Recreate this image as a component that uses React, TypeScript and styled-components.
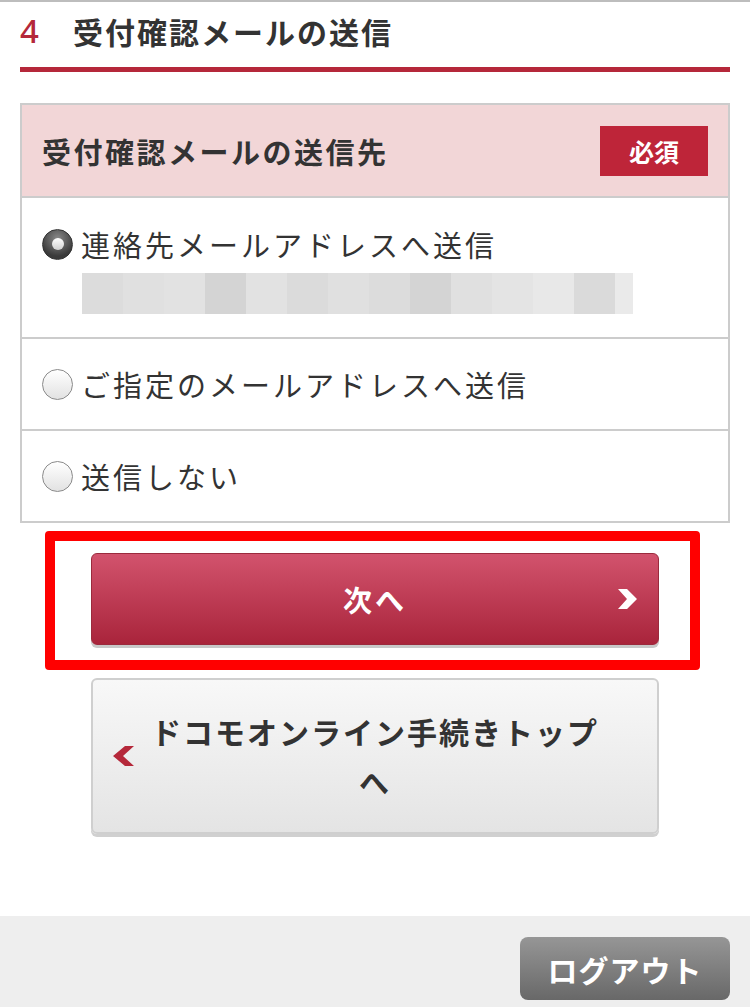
import styled, { createGlobalStyle } from "styled-components";

const GlobalStyle = createGlobalStyle`
  html, body {
    margin: 0;
    padding: 0;
    background: #fff;
  }
  body {
    font-family: "Noto Sans CJK JP", "Noto Sans", sans-serif;
    color: #333;
  }
`;

const Page = styled.div`
  width: 750px;
  min-height: 1007px;
  border-top: 2px solid #bdbdbd;
  box-sizing: border-box;
  display: flex;
  flex-direction: column;
`;

const Content = styled.main`
  padding: 0 20px;
  flex: 1;
`;

const Heading = styled.h2`
  margin: 10px 0 0;
  display: flex;
  align-items: center;
  gap: 32px;
  font-size: 30px;
  line-height: 38px;
  font-weight: 700;
  letter-spacing: 2px;
  color: #333;
`;

const StepNumber = styled.span`
  color: #b5283a;
  font-size: 33px;
  font-weight: 500;
  font-family: "Noto Sans", sans-serif;
`;

const HeadingBar = styled.div`
  height: 5px;
  margin-top: 17px;
  background: #b5283a;
`;

const FieldBox = styled.section`
  margin-top: 31px;
  border: 2px solid #cccccc;
`;

const FieldHeader = styled.div`
  height: 91px;
  padding: 0 20px;
  display: flex;
  align-items: center;
  justify-content: space-between;
  background: #f2d6d7;
  border-bottom: 2px solid #cccccc;
`;

const FieldTitle = styled.h3`
  margin: 0;
  font-size: 29px;
  font-weight: 700;
  letter-spacing: 2.5px;
  color: #333;
`;

const Badge = styled.span`
  width: 108px;
  height: 50px;
  display: flex;
  align-items: center;
  justify-content: center;
  background: #be2539;
  color: #fff;
  font-size: 25px;
  font-weight: 700;
`;

const OptionRow = styled.div<{ $tall?: boolean }>`
  padding: ${(p) => (p.$tall ? "30px 20px 23px" : "0 20px")};
  height: ${(p) => (p.$tall ? "auto" : "90px")};
  display: flex;
  flex-direction: column;
  justify-content: center;
  & + & {
    border-top: 2px solid #cccccc;
  }
`;

const OptionLabel = styled.label`
  display: flex;
  align-items: center;
  gap: 8px;
  font-size: 29px;
  line-height: 32px;
  letter-spacing: 3px;
  color: #333;
`;

const Radio = styled.span<{ $checked?: boolean }>`
  width: 31px;
  height: 31px;
  border-radius: 50%;
  flex: none;
  box-sizing: border-box;
  display: flex;
  align-items: center;
  justify-content: center;
  border: 1px solid ${(p) => (p.$checked ? "#333" : "#8a8a8a")};
  background: ${(p) =>
    p.$checked
      ? "radial-gradient(circle at 50% 30%, #8a8a8a, #3a3a3a 70%)"
      : "linear-gradient(#ffffff, #e2e2e2)"};
  &::after {
    content: "";
    display: ${(p) => (p.$checked ? "block" : "none")};
    width: 12px;
    height: 12px;
    border-radius: 50%;
    background: linear-gradient(#ffffff, #d0d0d0);
  }
`;

const MaskedEmail = styled.div`
  margin: 13px 0 0 40px;
  display: flex;
  height: 41px;
`;

const Pixel = styled.span<{ $shade: string; $w: number }>`
  width: ${(p) => p.$w}px;
  background: ${(p) => p.$shade};
`;

const Actions = styled.div`
  margin: 8px 0 0 25px;
  display: flex;
  flex-direction: column;
  align-items: flex-start;
`;

const Highlight = styled.div`
  width: 655px;
  height: 139px;
  box-sizing: border-box;
  border: 10px solid #ff0000;
  border-radius: 4px;
  padding: 12px 0 0 36px;
`;

const NextButton = styled.button`
  position: relative;
  width: 568px;
  height: 92px;
  border: 1px solid #9b2a3d;
  border-radius: 6px;
  background: linear-gradient(#d2536d, #a9243b);
  box-shadow: 0 3px 0 #c8c8c8;
  color: #fff;
  font-family: inherit;
  font-size: 29px;
  font-weight: 700;
  letter-spacing: 3px;
  cursor: pointer;
`;

const BackButton = styled.button`
  position: relative;
  margin: 8px 0 0 46px;
  width: 568px;
  height: 156px;
  padding: 0 52px;
  border: 2px solid #cfcfcf;
  border-radius: 6px;
  background: linear-gradient(#f8f8f8, #e4e4e4);
  box-shadow: 0 3px 0 #d0d0d0;
  color: #333;
  font-family: inherit;
  font-size: 30px;
  line-height: 50px;
  font-weight: 700;
  letter-spacing: 2px;
  cursor: pointer;
`;

const ChevronIcon = styled.svg<{ $side: "left" | "right" }>`
  position: absolute;
  top: 50%;
  transform: translateY(-50%);
  ${(p) => (p.$side === "right" ? "right: 20px;" : "left: 19px;")}
`;

const Footer = styled.footer`
  height: 91px;
  background: #eeeeee;
  display: flex;
  justify-content: flex-end;
  padding: 21px 20px 0;
  box-sizing: border-box;
`;

const LogoutButton = styled.button`
  width: 210px;
  height: 63px;
  border: none;
  border-radius: 8px;
  background: linear-gradient(#969696, #686868);
  color: #fff;
  font-family: inherit;
  font-size: 30px;
  font-weight: 700;
  letter-spacing: 1px;
  cursor: pointer;
`;

const emailPixels = [
  "#dcdcdc", "#e0e0e0", "#e2e2e2", "#d4d4d4", "#e2e2e2", "#dbdbdb", "#e0e0e0",
  "#dcdcdc", "#d4d4d4", "#e0e0e0", "#e4e4e4", "#e8e8e8", "#dadada", "#eaeaea",
];

const App: React.FC = () => {
  return (
    <Page>
      <GlobalStyle />
      <Content>
        <Heading>
          <StepNumber>4</StepNumber>
          受付確認メールの送信
        </Heading>
        <HeadingBar />

        <FieldBox>
          <FieldHeader>
            <FieldTitle>受付確認メールの送信先</FieldTitle>
            <Badge>必須</Badge>
          </FieldHeader>
          <OptionRow $tall>
            <OptionLabel>
              <Radio $checked />
              連絡先メールアドレスへ送信
            </OptionLabel>
            <MaskedEmail>
              {emailPixels.map((shade, i) => (
                <Pixel key={i} $shade={shade} $w={i === emailPixels.length - 1 ? 18 : 41} />
              ))}
            </MaskedEmail>
          </OptionRow>
          <OptionRow>
            <OptionLabel>
              <Radio />
              ご指定のメールアドレスへ送信
            </OptionLabel>
          </OptionRow>
          <OptionRow>
            <OptionLabel>
              <Radio />
              送信しない
            </OptionLabel>
          </OptionRow>
        </FieldBox>

        <Actions>
          <Highlight>
            <NextButton>
              次へ
              <ChevronIcon $side="right" width="20" height="22" viewBox="0 0 20 22">
                <path d="M0 1 H9 L19 11 L9 21 H0 L9 11 Z" fill="#fff" />
              </ChevronIcon>
            </NextButton>
          </Highlight>
          <BackButton>
            <ChevronIcon $side="left" width="23" height="22" viewBox="0 0 23 22">
              <path d="M22 1 H13 L1 11 L13 21 H22 L11 11 Z" fill="#b5283a" />
            </ChevronIcon>
            ドコモオンライン手続きトップへ
          </BackButton>
        </Actions>
      </Content>
      <Footer>
        <LogoutButton>ログアウト</LogoutButton>
      </Footer>
    </Page>
  );
};

export default App;
